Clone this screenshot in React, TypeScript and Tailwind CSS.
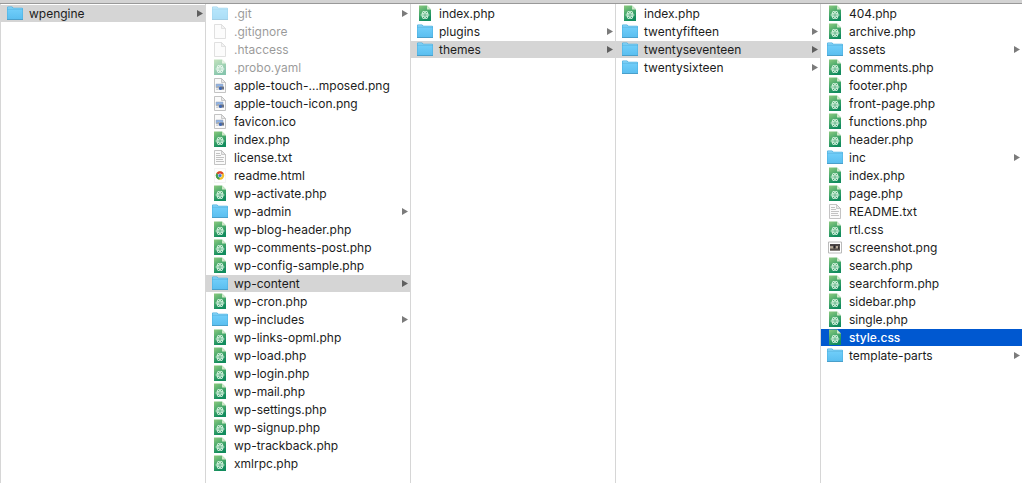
import { useState } from "react";

type Kind = "folder" | "code" | "blank" | "image" | "text" | "html" | "shot";

interface Entry {
  name: string;
  kind: Kind;
  dimmed?: boolean;
}

const code = (name: string): Entry => ({ name, kind: "code" });
const folder = (name: string): Entry => ({ name, kind: "folder" });

const columns: Entry[][] = [
  [folder("wpengine")],
  [
    { name: ".git", kind: "folder", dimmed: true },
    { name: ".gitignore", kind: "blank", dimmed: true },
    { name: ".htaccess", kind: "blank", dimmed: true },
    { name: ".probo.yaml", kind: "code", dimmed: true },
    { name: "apple-touch-…mposed.png", kind: "image" },
    { name: "apple-touch-icon.png", kind: "image" },
    { name: "favicon.ico", kind: "image" },
    code("index.php"),
    { name: "license.txt", kind: "text" },
    { name: "readme.html", kind: "html" },
    code("wp-activate.php"),
    folder("wp-admin"),
    code("wp-blog-header.php"),
    code("wp-comments-post.php"),
    code("wp-config-sample.php"),
    folder("wp-content"),
    code("wp-cron.php"),
    folder("wp-includes"),
    code("wp-links-opml.php"),
    code("wp-load.php"),
    code("wp-login.php"),
    code("wp-mail.php"),
    code("wp-settings.php"),
    code("wp-signup.php"),
    code("wp-trackback.php"),
    code("xmlrpc.php"),
  ],
  [code("index.php"), folder("plugins"), folder("themes")],
  [code("index.php"), folder("twentyfifteen"), folder("twentyseventeen"), folder("twentysixteen")],
  [
    code("404.php"),
    code("archive.php"),
    folder("assets"),
    code("comments.php"),
    code("footer.php"),
    code("front-page.php"),
    code("functions.php"),
    code("header.php"),
    folder("inc"),
    code("index.php"),
    code("page.php"),
    { name: "README.txt", kind: "text" },
    code("rtl.css"),
    { name: "screenshot.png", kind: "shot" },
    code("search.php"),
    code("searchform.php"),
    code("sidebar.php"),
    code("single.php"),
    code("style.css"),
    folder("template-parts"),
  ],
];

function Paper() {
  return (
    <>
      <path d="M2.5 1.5h7l4 4v10h-11z" fill="#fafafa" stroke="#bcbcbc" strokeWidth="0.9" />
      <path d="M9.5 1.5v4h4z" fill="#e8e8e8" stroke="#b8b8b8" strokeWidth="0.7" />
    </>
  );
}

function Glyph({ kind }: { kind: Kind }) {
  switch (kind) {
    case "folder":
      return (
        <>
          <path d="M0 2.4Q0 1.4 1 1.4H5L6.4 2.8H15Q16 2.8 16 3.8V15H0z" fill="#4aaede" />
          <path d="M0.6 2.6Q0.6 2 1.3 2H4.8L6.1 3.3H15.4V4.6H0.6z" fill="#7accf2" />
          <path d="M0.5 4.8H15.5V14H0.5z" fill="url(#folder-fill)" />
          <path d="M0 14.5H16" stroke="#4a9fca" strokeWidth="1" />
        </>
      );
    case "code":
      return (
        <>
          <path d="M2 0.5H10L14 4.5V16H2z" fill="url(#code-fill)" />
          <path d="M10 0.5V4.5H14z" fill="#cfe8c8" />
          <g fill="none" stroke="#d6f1e0" strokeWidth="0.8">
            <ellipse cx="8" cy="10" rx="4.1" ry="1.9" />
            <ellipse cx="8" cy="10" rx="4.1" ry="1.9" transform="rotate(60 8 10)" />
            <ellipse cx="8" cy="10" rx="4.1" ry="1.9" transform="rotate(120 8 10)" />
          </g>
          <circle cx="8" cy="10" r="0.8" fill="#e2f6e9" />
        </>
      );
    case "blank":
      return <Paper />;
    case "text":
      return (
        <>
          <Paper />
          <path d="M4 4.5h4M4 6.5h5M4 8.5h8M4 10.5h7M4 12.5h8" stroke="#b4b4b4" strokeWidth="0.8" />
        </>
      );
    case "image":
      return (
        <>
          <Paper />
          <path d="M4 7h7v3.6H4z" fill="#8fb2e4" stroke="#9aa3b2" strokeWidth="0.5" />
          <path d="M4.2 10.5l2-1.6 1.6 1.1 1.4-0.8 1.4 1.3z" fill="#b9ab94" />
          <path d="M8.4 9.6h3.6v3H8.4z" fill="#6d7380" />
          <circle cx="8.4" cy="11.4" r="1.6" fill="#3e68b4" />
          <path d="M4.2 12.2h2.4" stroke="#a9a9a9" strokeWidth="0.8" />
        </>
      );
    case "html":
      return (
        <>
          <path d="M2.5 1.5h11v14h-11z" fill="#fefefe" stroke="#ececec" strokeWidth="0.6" />
          <circle cx="8" cy="8.5" r="4.2" fill="#f3c12d" />
          <path d="M8 8.5L4.4 6.3A4.2 4.2 0 0 1 11.6 6.3z" fill="#d9402f" />
          <path d="M8 8.5L4.4 6.3A4.2 4.2 0 0 0 7.4 12.7z" fill="#3f9f51" />
          <circle cx="8" cy="8.5" r="2" fill="#fff" />
          <circle cx="8" cy="8.5" r="1.6" fill="#3a77d6" />
        </>
      );
    case "shot":
      return (
        <>
          <path d="M1.5 3h13v11h-13z" fill="#fff" stroke="#b2b2b2" strokeWidth="0.9" />
          <path d="M3 5h10v6.5H3z" fill="#7b7269" />
          <path d="M3 5h10v2H3z" fill="#4b4546" />
          <path d="M3 7.2h3v2H3zM9 7h2v2H9z" fill="#b5a999" />
          <path d="M6.6 6.5h1.8v3H6.6zM11.2 7.2h1.2V10h-1.2z" fill="#272326" />
          <path d="M3 10h10v1.5H3z" fill="#554e4a" />
        </>
      );
  }
}

function Row({
  entry,
  state,
  onSelect,
}: {
  entry: Entry;
  state: "none" | "path" | "active";
  onSelect: () => void;
}) {
  const tone =
    state === "active"
      ? "bg-[#0058d0] text-white font-medium"
      : state === "path"
        ? "bg-[#d5d5d5] text-[#1c1c1c]"
        : "text-[#1c1c1c]";
  return (
    <li>
      <button
        type="button"
        onClick={onSelect}
        aria-pressed={state !== "none"}
        className={`flex h-[17px] w-full items-center gap-1.5 pl-1.5 pr-0.5 text-left focus:outline-none ${tone}`}
      >
        <svg
          viewBox="0 0 16 17"
          aria-hidden="true"
          className={`h-[17px] w-4 shrink-0 ${entry.dimmed ? "opacity-50" : ""}`}
        >
          <Glyph kind={entry.kind} />
        </svg>
        <span className={`min-w-0 flex-1 whitespace-nowrap ${entry.dimmed ? "opacity-45" : ""}`}>{entry.name}</span>
        {entry.kind === "folder" && (
          <svg viewBox="0 0 6 7" aria-hidden="true" className="h-[7px] w-1.5 shrink-0">
            <path d="M0 0L6 3.5L0 7z" fill={state === "path" ? "#5f5f5f" : "#7b7b7b"} />
          </svg>
        )}
      </button>
    </li>
  );
}

export default function App() {
  const [path, setPath] = useState<number[]>([0, 15, 2, 2, 18]);

  return (
    <main className="flex min-h-screen flex-col overflow-hidden bg-white font-['Inter','Liberation_Sans',sans-serif] text-[12px] leading-[17px]">
      <svg className="absolute size-0" aria-hidden="true">
        <defs>
          <linearGradient id="folder-fill" x1="0" y1="0" x2="0" y2="1">
            <stop offset="0" stopColor="#6fcdf9" />
            <stop offset="1" stopColor="#5bbff0" />
          </linearGradient>
          <linearGradient id="code-fill" x1="0" y1="0" x2="0.4" y2="1">
            <stop offset="0" stopColor="#8cc97f" />
            <stop offset="0.5" stopColor="#4bab6c" />
            <stop offset="1" stopColor="#128c5d" />
          </linearGradient>
        </defs>
      </svg>
      <div className="h-1 border-b border-[#999999] bg-[#d3d3d3]" />
      <div className="grid flex-1 grid-cols-[repeat(4,205px)_minmax(201px,1fr)]">
        {columns.map((entries, c) => (
          <ul key={c} className="flex flex-col gap-px border-l border-[#d6d6d6] pt-px">
            {entries.map((entry, r) => (
              <Row
                key={entry.name}
                entry={entry}
                state={path[c] !== r ? "none" : c === columns.length - 1 ? "active" : "path"}
                onSelect={() => setPath(path.map((value, i) => (i === c ? r : value)))}
              />
            ))}
          </ul>
        ))}
      </div>
    </main>
  );
}
